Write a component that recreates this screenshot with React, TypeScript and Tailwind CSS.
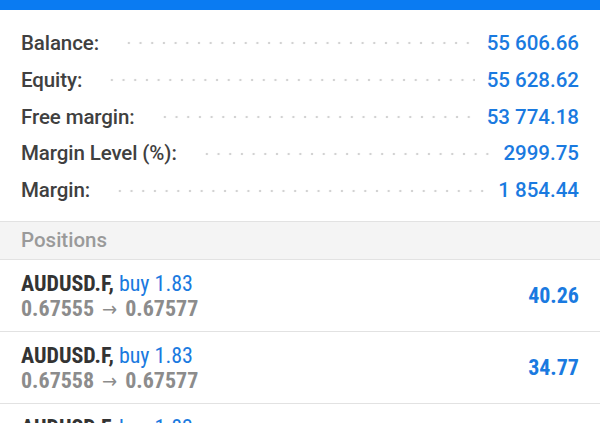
import React from "react";

const summary = [
  { label: "Balance:", value: "55 606.66" },
  { label: "Equity:", value: "55 628.62" },
  { label: "Free margin:", value: "53 774.18" },
  { label: "Margin Level (%):", value: "2999.75" },
  { label: "Margin:", value: "1 854.44" },
];

const positions = [
  { symbol: "AUDUSD.F,", side: "buy 1.83", open: "0.67555", current: "0.67577", profit: "40.26" },
  { symbol: "AUDUSD.F,", side: "buy 1.83", open: "0.67558", current: "0.67577", profit: "34.77" },
  { symbol: "AUDUSD.F,", side: "buy 1.83", open: "0.67560", current: "0.67577", profit: "31.12" },
];

const condensed = {
  fontFamily: '"Roboto Condensed", "Liberation Sans Narrow", "DejaVu Sans Condensed", sans-serif',
};

export default function App() {
  return (
    <div className="w-[600px] h-[423px] overflow-hidden bg-white font-['Roboto',sans-serif]">
      <div className="h-[10px] bg-[#0a7bf2]" />

      {/* account summary */}
      <div className="flex flex-col px-[21px] pt-[15px] pb-[12px]">
        {summary.map((row) => (
          <div key={row.label} className="flex items-center h-[36.8px]">
            <span className="text-[20.5px] font-medium text-[#404040] tracking-[-0.1px]">
              {row.label}
            </span>
            <div className="flex-1 h-[4px] ml-[24px] mr-[12px] bg-[radial-gradient(circle,#d2d2d2_1.1px,transparent_1.6px)] bg-[length:11.7px_4px]" />
            <span className="text-[20.5px] font-medium text-[#1a7ae0]">{row.value}</span>
          </div>
        ))}
      </div>

      {/* positions */}
      <div className="border-t border-[#e2e2e2] bg-[#f4f4f4] h-[38px] flex items-center px-[21px]">
        <span className="text-[20.5px] font-medium text-[#9a9a9a]">Positions</span>
      </div>

      {positions.map((p, i) => (
        <div
          key={i}
          className="border-t border-[#e2e2e2] h-[72px] flex items-center justify-between px-[21px]"
          style={condensed}
        >
          <div className="flex flex-col leading-[25px] pt-[2px]">
            <div className="text-[22px]">
              <span className="font-bold text-[#333333]">{p.symbol}</span>{" "}
              <span className="text-[#1a7ae0]">{p.side}</span>
            </div>
            <div className="text-[22px] font-bold text-[#8c8c8c]">
              {p.open}
              <span className="font-normal text-[20px] mx-[8px]">→</span>
              {p.current}
            </div>
          </div>
          <span className="text-[22px] font-bold text-[#1a7ae0]">{p.profit}</span>
        </div>
      ))}
    </div>
  );
}
